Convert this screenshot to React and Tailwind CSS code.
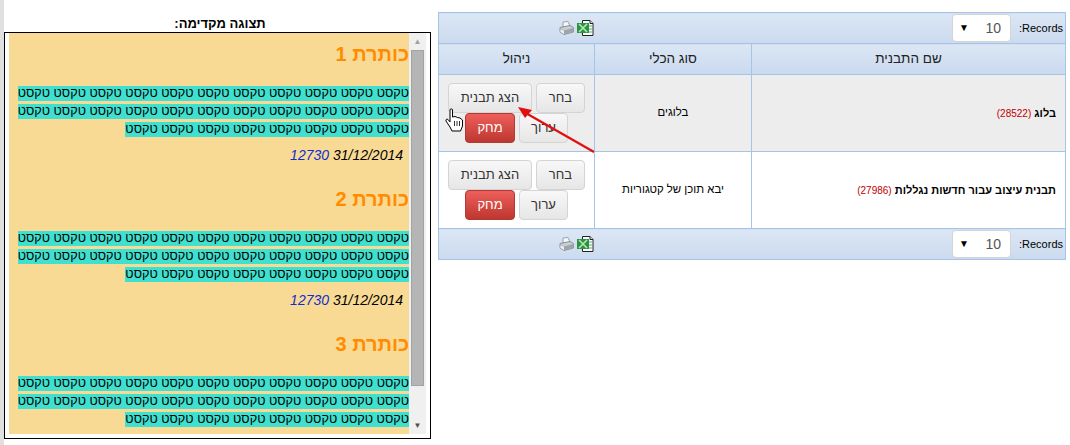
const sans = "font-['Liberation_Sans',Arial,sans-serif]";
const WORDS = Array(30).fill("טקסט").join(" ");

function Article({ n }) {
  return (
    <div className="mb-[14px]">
      <h2 className="text-[20px] leading-[26px] font-bold text-[#ff8c00] m-0 pt-[8px] mb-[17px]">כותרת {n}</h2>
      <p className="text-[12.7px] leading-[18px] mb-[8px]"><span className="bg-[#40e0d0] pb-[1px] text-black">{WORDS}</span></p>
      {n < 3 && (
        <div className="text-[14px] leading-[18px] italic pr-[6px]"><span className="text-black">31/12/2014</span> <span className="text-[#0b2fd0]">12730</span></div>
      )}
    </div>
  );
}

function Printer() {
  return (
    <svg width="15" height="15" viewBox="0 0 15 15">
      <path d="M4 1 L9 0.5 L11 5 L4 6 Z" fill="#f4f7fb" stroke="#8a9099" strokeWidth="0.8" />
      <path d="M1 6.5 L11 4.5 L14.5 6.5 L14.5 11 L5 13.5 L1 11 Z" fill="#c9ced4" stroke="#7d848c" strokeWidth="0.8" />
      <path d="M1 7 L5 9.5 L14.5 7 L14.5 11 L5 13.5 L1 11 Z" fill="#9da4ac" />
      <path d="M1.5 8 L5 10 L5 13 L1.5 11 Z" fill="#eef1f4" />
    </svg>
  );
}

function Excel() {
  return (
    <svg width="17" height="16" viewBox="0 0 17 16">
      <path d="M5.5 0.5 H13 L16 3.5 V15.5 H5.5 Z" fill="#fff" stroke="#222" />
      <path d="M13 0.5 V3.5 H16" fill="#ddd" stroke="#222" />
      <rect x="0" y="3" width="12" height="10" fill="#2a9440" />
      <path d="M2 4 L10 12 M10 4 L2 12" stroke="#b6e6b6" strokeWidth="1.6" />
      <path d="M12 6 H15 M12 9 H15 M12 12 H15" stroke="#5aa86a" />
    </svg>
  );
}

function Bar() {
  return (
    <tr>
      <td colSpan={3} className="h-[31px] p-0 border border-[#a6c3e8] bg-gradient-to-b from-[#dce7f5] to-[#cbdaee]">
        <div className="flex items-center h-[30px]">
          <span dir="ltr" className="text-[11px] mr-[3px] w-[43px] text-black">:Records</span>
          <div className="mr-[8px] w-[59px] h-[28px] bg-white border border-[#d4d4d4] rounded-[4px] flex items-center justify-between pr-[9px] pl-[6px]">
            <span className="text-[14px] text-[#555]">10</span>
            <span className="text-[10px] text-black leading-none">▼</span>
          </div>
          <div className="mr-[358px] flex items-center gap-[3px]">
            <Excel />
            <Printer />
          </div>
        </div>
      </td>
    </tr>
  );
}

function Btn({ children, w, red }) {
  return (
    <button className={`${w} h-[30px] rounded-[4px] border text-[13px] ${red ? "bg-gradient-to-b from-[#ee5f5b] to-[#bd362f] border-[#b23a35] text-white" : "bg-gradient-to-b from-[#f8f8f8] to-[#e6e6e6] border-[#d4d4d4] text-[#333]"}`}>
      {children}
    </button>
  );
}

function Row({ name, id, type, bg }) {
  return (
    <tr className={bg}>
      <td className="h-[77px] border border-[#a6c3e8] pr-[9px] text-[11px] align-middle whitespace-nowrap">
        <b className="text-black">{name}</b> <span className="text-[#c00000] text-[10px]">({id})</span>
      </td>
      <td className="border border-[#a6c3e8] text-center text-[11.4px] text-black">{type}</td>
      <td className="border border-[#a6c3e8] p-0">
        <div className="flex flex-wrap justify-center gap-x-[4px]">
          <Btn w="w-[49px]">בחר</Btn>
          <Btn w="w-[84px]">הצג תבנית</Btn>
          <Btn w="w-[49px]">ערוך</Btn>
          <Btn w="w-[50px]" red>מחק</Btn>
        </div>
      </td>
    </tr>
  );
}

function Th({ children }) {
  return (
    <th className="h-[31px] p-0 font-normal text-[13.5px] text-[#222] border border-[#a6c3e8] bg-gradient-to-b from-[#dce7f5] to-[#c9d9ee]">{children}</th>
  );
}

export default function App() {
  return (
    <div dir="rtl" className={`${sans} relative w-[1070px] h-[445px] bg-white overflow-hidden flex justify-start`}>
      <div className="mt-3 mr-[4px] ml-[7px] w-[628px]">
        <table className="w-[627px] border-collapse table-fixed">
          <colgroup>
            <col className="w-[314px]" />
            <col className="w-[157px]" />
            <col className="w-[156px]" />
          </colgroup>
          <thead>
            <Bar />
            <tr>
              <Th>שם התבנית</Th>
              <Th>סוג הכלי</Th>
              <Th>ניהול</Th>
            </tr>
          </thead>
          <tbody>
            <Row name="בלוג" id="28522" type="בלוגים" bg="bg-[#ededed]" />
            <Row name="תבנית עיצוב עבור חדשות נגללות" id="27986" type="יבא תוכן של קטגוריות" bg="bg-white" />
            <Bar />
          </tbody>
        </table>
      </div>
      <div className="w-[427px] pt-[15px]">
        <div className="text-center text-[13px] leading-[17px] font-bold text-black pl-[5px]">תצוגה מקדימה:</div>
        <div className="h-[407px] border border-black flex pl-[4px] pb-[4px] pr-[4px]">
          <div className="w-[17px] bg-[#f0f0f0] flex flex-col items-center shrink-0">
            <span className="h-[17px] text-[8px] leading-[17px] text-[#a0a0a0]">▲</span>
            <div className="w-[13px] h-[336px] bg-[#b5b5b5] border border-[#a3a3a3]"></div>
            <span className="mt-auto h-[17px] text-[8px] leading-[17px] text-[#505050]">▼</span>
          </div>
          <div className="w-[400px] bg-[#f9da94] overflow-hidden">
            <Article n={1} />
            <Article n={2} />
            <Article n={3} />
          </div>
        </div>
      </div>
      <div className="w-[4px] bg-[#e0e0e0] shrink-0"></div>
      <svg className="absolute left-[510px] top-[100px]" width="90" height="60" viewBox="0 0 90 60">
        <path d="M84 52 L14 12" stroke="#e01010" strokeWidth="2.2" />
        <path d="M8 7 L22 10 L15 18 Z" fill="#e01010" />
      </svg>
      <svg className="absolute left-[445px] top-[108px]" width="19" height="24" viewBox="0 0 19 24">
        <path d="M5 2 C5 0.5 7.5 0.5 7.5 2 L7.5 9 L10 8.5 L12.5 9.5 L15 10 L17.5 12 L17.5 18 L15.5 23 L7 23 L5 19 L1 13 C0.5 11.5 2 10.5 3 11.5 L5 14 Z" fill="#fff" stroke="#000" strokeWidth="1" />
        <path d="M9.5 13 V18 M12 13 V18 M14.5 13 V18" stroke="#000" strokeWidth="0.8" />
      </svg>
    </div>
  );
}
